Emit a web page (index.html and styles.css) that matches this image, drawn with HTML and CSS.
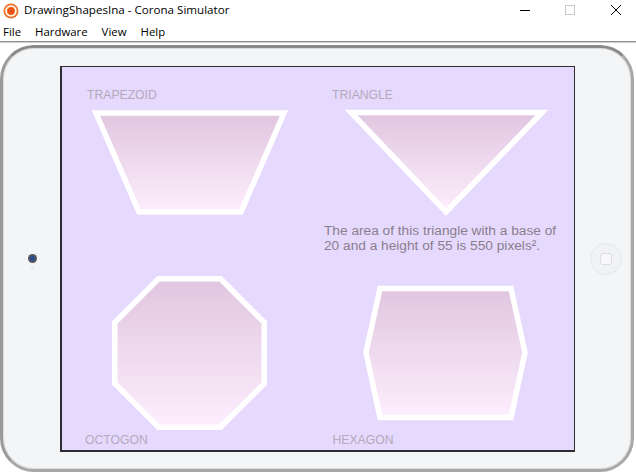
FILE: index.html
```html
<!DOCTYPE html>
<html>
<head>
<meta charset="utf-8">
<link rel="stylesheet" href="styles.css">
</head>
<body>
<div class="window">
  <header class="titlebar">
    <svg class="app-icon" width="16" height="16" viewBox="0 0 16 16">
      <circle cx="8" cy="8" r="7.5" fill="#f36f21"/>
      <circle cx="8" cy="8" r="5" fill="none" stroke="#fff" stroke-width="1.6"/>
      <circle cx="8" cy="8" r="3" fill="#e8501a"/>
    </svg>
    <span class="title">DrawingShapesIna - Corona Simulator</span>
    <div class="controls">
      <svg class="ctl ctl-min" width="10" height="10" viewBox="0 0 10 10"><line x1="0" y1="5.5" x2="10" y2="5.5" stroke="#000" stroke-width="1"/></svg>
      <svg class="ctl ctl-max" width="10" height="10" viewBox="0 0 10 10"><rect x="0.5" y="0.5" width="9" height="9" fill="none" stroke="#c8c8c8" stroke-width="1"/></svg>
      <svg class="ctl ctl-close" width="10" height="10" viewBox="0 0 10 10"><path d="M0 0 L10 10 M10 0 L0 10" stroke="#000" stroke-width="1"/></svg>
    </div>
  </header>
  <nav class="menubar">
    <span class="menu-item">File</span>
    <span class="menu-item">Hardware</span>
    <span class="menu-item">View</span>
    <span class="menu-item">Help</span>
  </nav>
  <div class="separator"></div>
  <div class="device">
    <div class="side side-left">
      <div class="camera"></div>
      <div class="sensor"></div>
    </div>
    <div class="screen">
      <svg class="canvas" width="512" height="383" viewBox="0 0 512 383">
        <defs>
          <linearGradient id="fillGrad" x1="0" y1="0" x2="0" y2="1">
            <stop offset="0" stop-color="#e0c6df"/>
            <stop offset="1" stop-color="#fdeefe"/>
          </linearGradient>
        </defs>
        <rect width="512" height="383" fill="#e6d9fe"/>
        <text class="label" x="25" y="32">TRAPEZOID</text>
        <text class="label" x="270" y="32">TRIANGLE</text>
        <polygon class="shape" points="34,46 222,46 179,145 77,145"/>
        <polygon class="shape" points="289,45.5 480,45.5 384,145"/>
        <text class="info" x="262" y="168.2">The area of this triangle with a base of</text>
        <text class="info" x="262" y="183.2">20 and a height of 55 is 550 pixels².</text>
        <polygon class="shape" points="96.5,211.75 158.5,211.75 202.25,255.5 202.25,316.5 158.5,360.25 96.5,360.25 52.75,316.5 52.75,255.5"/>
        <polygon class="shape" points="318,221.5 449,221.5 463,285.5 449,350.5 318,350.5 304,285.5"/>
        <text class="label" x="23" y="377">OCTOGON</text>
        <text class="label" x="270.5" y="377">HEXAGON</text>
      </svg>
    </div>
    <div class="side side-right">
      <div class="home"><div class="home-square"></div></div>
    </div>
  </div>
</div>
</body>
</html>
```

FILE: styles.css
```css
html, body {
  margin: 0;
  padding: 0;
  background: #ffffff;
}

.window {
  width: 636px;
  height: 473px;
  overflow: hidden;
  background: #ffffff;
  font-family: "Open Sans", "Noto Sans", sans-serif;
}

.titlebar {
  height: 22px;
  display: flex;
  align-items: flex-start;
  background: #ffffff;
}

.app-icon {
  margin: 3px 0 0 3px;
  flex: none;
}

.title {
  margin-left: 5px;
  margin-top: 1px;
  font-size: 11.6px;
  line-height: 18px;
  color: #000;
}

.controls {
  margin-left: auto;
  display: flex;
  align-items: flex-start;
  padding-right: 15px;
}

.ctl {
  display: block;
  margin-top: 5px;
}

.ctl-min { margin-right: 35px; }
.ctl-max { margin-right: 36px; }

.menubar {
  height: 19px;
  display: flex;
  gap: 14px;
  padding-left: 3px;
  font-size: 11.4px;
  line-height: 19px;
  color: #000;
}

.menu-item {
  display: block;
}

.separator {
  height: 2px;
  background: linear-gradient(#8f8f8f 0 1px, #cfcfcf 1px 2px);
}

.device {
  margin-top: 2px;
  width: 634px;
  height: 427px;
  box-sizing: border-box;
  border: 3px solid #a8a8a8;
  border-top-color: #8a8a8a;
  border-left-color: #9a9a9a;
  border-radius: 34px;
  background: #f4f5f7;
  box-shadow: inset 0 0 0 1px #dcdcdc;
  display: flex;
  align-items: flex-start;
  padding-top: 18px;
}

.side {
  flex: none;
  height: 386px;
  display: flex;
  flex-direction: column;
  align-items: center;
  justify-content: center;
}

.side-left {
  width: 57px;
}

.side-right {
  width: 56px;
  align-items: flex-start;
  padding-left: 15px;
  box-sizing: border-box;
}

.camera {
  width: 9px;
  height: 9px;
  border-radius: 50%;
  background: radial-gradient(circle, #1f4c96 0 1.6px, #505560 2.8px);
  margin-top: 6px;
  margin-left: 1px;
}

.sensor {
  width: 3px;
  height: 3px;
  border-radius: 50%;
  background: #e4e5e8;
  margin-top: 4px;
  margin-left: 2px;
}

.home {
  width: 32px;
  height: 32px;
  box-sizing: border-box;
  border-radius: 50%;
  border: 1px solid #e6e7ea;
  background: #f1f2f4;
  display: flex;
  align-items: center;
  justify-content: center;
}

.home-square {
  width: 10px;
  height: 10px;
  border: 1px solid #dcdde0;
  border-radius: 3px;
  background: #f8f8fa;
}

.screen {
  flex: none;
  width: 515px;
  height: 386px;
  box-sizing: border-box;
  border-style: solid;
  border-color: #2e2e32;
  border-width: 1px 1px 2px 2px;
  background: #e6d9fe;
}

.canvas {
  display: block;
}

.shape {
  fill: url(#fillGrad);
  stroke: #ffffff;
  stroke-width: 5.5;
  stroke-linejoin: miter;
}

.label {
  font-family: "Liberation Sans", Arial, sans-serif;
  font-size: 12.2px;
  fill: #b3aabb;
}

.info {
  font-family: "Liberation Sans", Arial, sans-serif;
  font-size: 13.7px;
  fill: #8a7e8d;
}
```
